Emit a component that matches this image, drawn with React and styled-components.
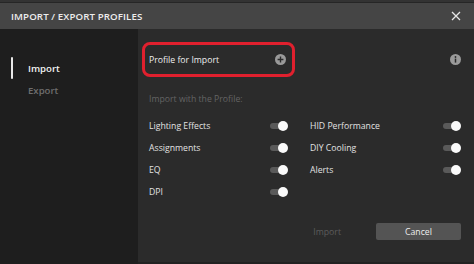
import React from "react";
import styled, { createGlobalStyle } from "styled-components";

const Global = createGlobalStyle`
  html, body { margin: 0; padding: 0; background: #1e1e1e; }
  body { font-family: "Open Sans", "Noto Sans", sans-serif; width: 474px; height: 264px; overflow: hidden; }
  * { box-sizing: border-box; }
`;

const Frame = styled.div`
  width: 474px;
  height: 264px;
  display: flex;
  flex-direction: column;
  background: #1e1e1e;
`;

const TopStrip = styled.div`
  height: 3px;
  background: #333;
  border-bottom: 1px solid #262626;
`;

const Header = styled.div`
  height: 26px;
  background: #454545;
  display: flex;
  align-items: center;
  justify-content: space-between;
  padding: 0 11px 0 11px;
`;

const Title = styled.div`
  color: #ededed;
  font-size: 9.7px;
  font-weight: 600;
  letter-spacing: 0.1px;
`;

const Close = styled.div`
  width: 14px;
  height: 14px;
  display: flex;
  align-items: center;
  justify-content: center;
`;

const Body = styled.div`
  flex: 1;
  display: flex;
`;

const Sidebar = styled.div`
  width: 139px;
  background: #1e1e1e;
  padding-top: 28px;
  display: flex;
  flex-direction: column;
`;

const NavItem = styled.div`
  height: 22px;
  display: flex;
  align-items: center;
  padding-left: 28px;
  position: relative;
  color: ${(p) => (p.$active ? "#f2f2f2" : "#6e6e6e")};
  font-size: 9.6px;
  font-weight: 600;
  &::before {
    content: "";
    display: ${(p) => (p.$active ? "block" : "none")};
    position: absolute;
    left: 11px;
    top: 0;
    width: 2px;
    height: 22px;
    background: #e8e8e8;
    border-radius: 1px;
  }
`;

const Main = styled.div`
  flex: 1;
  background: #2b2b2b;
  padding: 13px 13px 0 4px;
  display: flex;
  flex-direction: column;
  border-bottom: 2px solid #222;
`;

const TopRow = styled.div`
  display: flex;
  align-items: center;
  justify-content: space-between;
`;

const ProfileBox = styled.div`
  width: 153px;
  height: 35px;
  border: 3px solid #e0202e;
  border-radius: 8px;
  display: flex;
  align-items: center;
  justify-content: space-between;
  padding: 0 6px 0 4px;
  color: #efefef;
  font-size: 8.7px;
`;

const Subtitle = styled.div`
  color: #646464;
  font-size: 8.7px;
  margin-top: 16px;
  padding-left: 7px;
`;

const Grid = styled.div`
  display: grid;
  grid-template-columns: 139px 151px;
  column-gap: 22px;
  margin-top: 10px;
  padding-left: 7px;
`;

const Row = styled.div`
  height: 22px;
  display: flex;
  align-items: center;
  justify-content: space-between;
  color: #e2e2e2;
  font-size: 8.7px;
`;

const Toggle = styled.div`
  width: 18px;
  height: 10px;
  position: relative;
  &::before {
    content: "";
    position: absolute;
    left: 0;
    top: 2px;
    width: 16px;
    height: 6px;
    border-radius: 3px;
    background: #5a5a5a;
  }
  &::after {
    content: "";
    position: absolute;
    right: 0;
    top: 0;
    width: 10px;
    height: 10px;
    border-radius: 50%;
    background: #fafafa;
  }
`;

const Footer = styled.div`
  margin-top: auto;
  height: 50px;
  display: flex;
  align-items: flex-start;
  justify-content: flex-end;
  gap: 35px;
  padding-top: 11px;
`;

const TextButton = styled.div`
  color: #5c5c5c;
  font-size: 8.7px;
  height: 17px;
  display: flex;
  align-items: center;
`;

const Button = styled.div`
  width: 85px;
  height: 17px;
  background: #545454;
  color: #eeeeee;
  font-size: 8.7px;
  border-radius: 2px;
  display: flex;
  align-items: center;
  justify-content: center;
`;

const PlusIcon = () => (
  <svg width="11" height="11" viewBox="0 0 11 11">
    <circle cx="5.5" cy="5.5" r="5.5" fill="#9a9a9a" />
    <path d="M5.5 2.6v5.8M2.6 5.5h5.8" stroke="#2b2b2b" strokeWidth="1.4" />
  </svg>
);

const InfoIcon = () => (
  <svg width="11" height="11" viewBox="0 0 11 11">
    <circle cx="5.5" cy="5.5" r="5.5" fill="#9a9a9a" />
    <circle cx="5.5" cy="3" r="0.9" fill="#2b2b2b" />
    <path d="M5.5 4.6v4" stroke="#2b2b2b" strokeWidth="1.5" />
  </svg>
);

const left = ["Lighting Effects", "Assignments", "EQ", "DPI"];
const right = ["HID Performance", "DIY Cooling", "Alerts"];

export default function App() {
  const rows = [];
  for (let i = 0; i < 4; i++) {
    rows.push(
      <Row key={"l" + i}>
        <span>{left[i]}</span>
        <Toggle />
      </Row>
    );
    rows.push(
      right[i] ? (
        <Row key={"r" + i}>
          <span>{right[i]}</span>
          <Toggle />
        </Row>
      ) : (
        <Row key={"r" + i} />
      )
    );
  }
  return (
    <Frame>
      <Global />
      <TopStrip />
      <Header>
        <Title>IMPORT / EXPORT PROFILES</Title>
        <Close>
          <svg width="10" height="10" viewBox="0 0 10 10">
            <path d="M1 1l8 8M9 1l-8 8" stroke="#e6e6e6" strokeWidth="1.3" />
          </svg>
        </Close>
      </Header>
      <Body>
        <Sidebar>
          <NavItem $active>Import</NavItem>
          <NavItem>Export</NavItem>
        </Sidebar>
        <Main>
          <TopRow>
            <ProfileBox>
              <span>Profile for Import</span>
              <PlusIcon />
            </ProfileBox>
            <InfoIcon />
          </TopRow>
          <Subtitle>Import with the Profile:</Subtitle>
          <Grid>{rows}</Grid>
          <Footer>
            <TextButton>Import</TextButton>
            <Button>Cancel</Button>
          </Footer>
        </Main>
      </Body>
    </Frame>
  );
}
